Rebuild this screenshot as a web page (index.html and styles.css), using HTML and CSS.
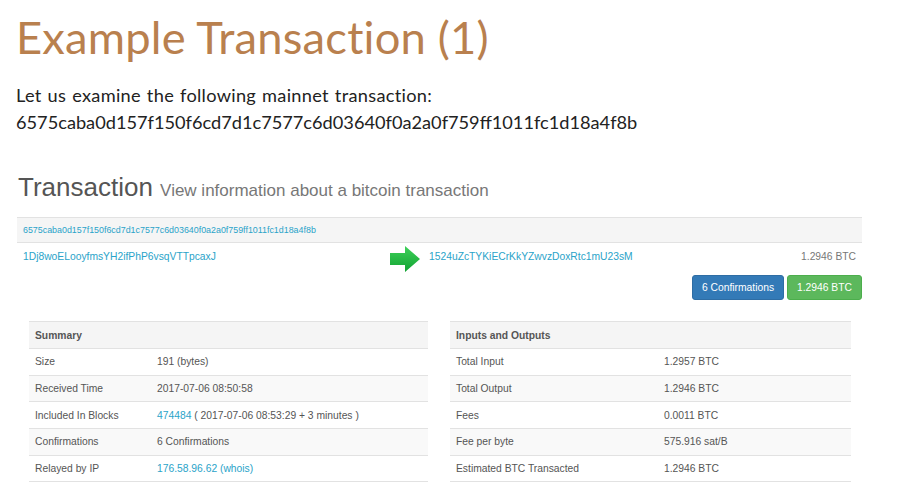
FILE: index.html
```html
<!DOCTYPE html>
<html>
<head>
<meta charset="utf-8">
<link rel="stylesheet" href="styles.css">
</head>
<body>
<div class="slide">
  <h1 class="title">Example Transaction (1)</h1>
  <p class="intro"><span class="lead">Let us examine the following mainnet transaction:</span><br>6575caba0d157f150f6cd7d1c7577c6d03640f0a2a0f759ff1011fc1d18a4f8b</p>

  <div class="explorer">
    <h2 class="page-head">Transaction <small>View information about a bitcoin transaction</small></h2>

    <div class="tx">
      <div class="tx-hash"><a>6575caba0d157f150f6cd7d1c7577c6d03640f0a2a0f759ff1011fc1d18a4f8b</a></div>
      <div class="tx-io">
        <div class="tx-in"><a>1Dj8woELooyfmsYH2ifPhP6vsqVTTpcaxJ</a></div>
        <div class="tx-arrow">
          <svg width="30" height="26" viewBox="0 0 30 26">
            <defs>
              <linearGradient id="g" x1="0" y1="0" x2="0" y2="1">
                <stop offset="0" stop-color="#3fd15a"/>
                <stop offset="1" stop-color="#11a232"/>
              </linearGradient>
            </defs>
            <path d="M0 7 H15 V0 L30 13 L15 26 V19 H0 Z" fill="url(#g)"/>
          </svg>
        </div>
        <div class="tx-out"><a>1524uZcTYKiECrKkYZwvzDoxRtc1mU23sM</a><span class="amt">1.2946 BTC</span></div>
      </div>
      <div class="tx-badges">
        <span class="btn btn-blue">6 Confirmations</span>
        <span class="btn btn-green">1.2946 BTC</span>
      </div>
    </div>

    <div class="panels">
      <table class="info left">
        <tr><th colspan="2">Summary</th></tr>
        <tr><td class="k">Size</td><td>191 (bytes)</td></tr>
        <tr><td class="k">Received Time</td><td>2017-07-06 08:50:58</td></tr>
        <tr><td class="k">Included In Blocks</td><td><a>474484</a> ( 2017-07-06 08:53:29 + 3 minutes )</td></tr>
        <tr><td class="k">Confirmations</td><td>6 Confirmations</td></tr>
        <tr><td class="k">Relayed by IP</td><td><a>176.58.96.62 (whois)</a></td></tr>
      </table>
      <table class="info right">
        <tr><th colspan="2">Inputs and Outputs</th></tr>
        <tr><td class="k">Total Input</td><td>1.2957 BTC</td></tr>
        <tr><td class="k">Total Output</td><td>1.2946 BTC</td></tr>
        <tr><td class="k">Fees</td><td>0.0011 BTC</td></tr>
        <tr><td class="k">Fee per byte</td><td>575.916 sat/B</td></tr>
        <tr><td class="k">Estimated BTC Transacted</td><td>1.2946 BTC</td></tr>
      </table>
    </div>
  </div>
</div>
</body>
</html>
```
FILE: styles.css
```css
* { box-sizing: border-box; }
html, body { margin: 0; padding: 0; background: #fff; }
body { width: 901px; height: 489px; overflow: hidden; font-family: "Liberation Sans", Arial, sans-serif; }

.slide { padding: 9px 0 0 16px; }

.title {
  margin: 0;
  font-family: Lato, "Open Sans", sans-serif;
  font-weight: 400;
  font-size: 45.3px;
  line-height: 56px;
  color: #b9804e;
  letter-spacing: 0.2px;
}

.intro {
  margin: 17px 0 0 0;
  font-family: Lato, "Open Sans", sans-serif;
  font-size: 18.2px;
  line-height: 27px;
  color: #222;
}
.intro .lead { letter-spacing: 0.3px; word-spacing: 1px; }

.explorer { margin: 36px 0 0 1px; width: 845px; color: #555; }

.page-head {
  margin: 0 0 0 1px;
  font-weight: 400;
  font-size: 26px;
  line-height: 30px;
  color: #555;
}
.page-head small { font-size: 17px; color: #777; }

a { color: #2aa3c9; text-decoration: none; }

.tx { margin-top: 11px; }
.tx-hash {
  background: #f5f5f5;
  border-top: 1px solid #e2e2e2;
  border-bottom: 1px solid #e2e2e2;
  height: 26px;
  padding: 0 6px;
  display: flex;
  align-items: center;
  font-size: 8.9px;
}
.tx-io {
  display: flex;
  align-items: center;
  height: 26px;
  font-size: 10.3px;
}
.tx-in { width: 373px; padding-left: 6px; }
.tx-arrow { width: 39px; display: flex; align-items: center; padding-top: 5px; }
.tx-out { flex: 1; display: flex; justify-content: space-between; padding-right: 6px; }
.amt { color: #777; }

.tx-badges { display: flex; justify-content: flex-end; gap: 3px; margin-top: 6px; }
.btn {
  display: inline-flex; align-items: center; justify-content: center;
  height: 25px; padding: 0; border-radius: 3px; white-space: nowrap;
  color: #fff; font-size: 10.3px;
}
.btn-blue { background: #337ab7; border: 1px solid #2e6da4; width: 92px; }
.btn-green { background: #5cb85c; border: 1px solid #4cae4c; width: 75px; }

.panels { display: flex; margin-top: 21px; padding-left: 12px; gap: 22px; }
.info { border-collapse: collapse; font-size: 10.3px; color: #555; }
.info.left { width: 399px; }
.info.right { width: 401px; }
.info th {
  background: #f5f5f5; text-align: left; font-weight: 700;
  height: 27px; padding: 0 6px; border-top: 1px solid #e2e2e2;
}
.info td { height: 26.7px; padding: 0 6px; border-top: 1px solid #e2e2e2; }
.info tr:nth-child(odd) td { background: #f9f9f9; }
.info tr:last-child td { border-bottom: 1px solid #e2e2e2; }
.info.left td.k { width: 122px; }
.info.right td.k { width: 208px; }
```
